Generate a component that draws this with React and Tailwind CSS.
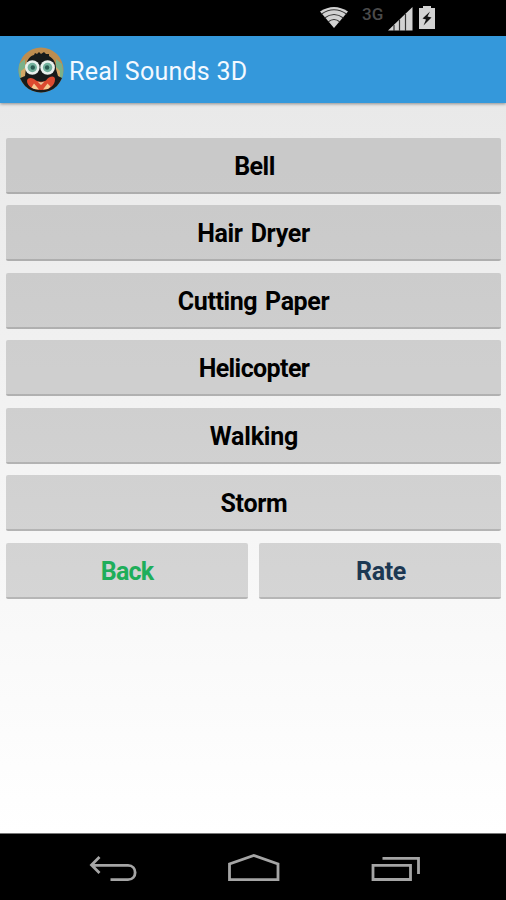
const sounds = [
  { name: 'Bell', spacing: 'tracking-[-0.5px] pl-[2px]' },
  { name: 'Hair Dryer', spacing: 'tracking-[-0.3px] [word-spacing:2px]' },
  { name: 'Cutting Paper', spacing: 'tracking-[-0.4px] [word-spacing:2px]' },
  { name: 'Helicopter', spacing: 'tracking-[-0.6px] pl-[1px]' },
  { name: 'Walking', spacing: 'tracking-[-0.2px] pl-[1px]' },
  { name: 'Storm', spacing: 'tracking-[-0.3px] pl-[1px]' },
]

function StatusBar() {
  return (
    <div className="h-9 shrink-0 bg-black flex justify-end pr-[71px]">
      <svg width="28" height="22" viewBox="0 0 28 22" className="mt-[6px]">
        <path d="M0 5.5Q14-3.5 28 5.5L14 22Z" fill="#d2d2d2" />
        <path
          d="M1.5 8Q14-.5 26.5 8M4.5 12Q14 5 23.5 12M8 16Q14 11 20 16"
          fill="none"
          stroke="#333"
          strokeWidth="1.1"
        />
      </svg>
      <span className="ml-[14px] mt-[3px] w-[25px] text-[17px] leading-[22px] font-medium text-[#4b4b4b]">
        3G
      </span>
      <svg width="25" height="24" viewBox="0 0 25 24" className="mt-[7px] ml-[1px]">
        <path d="M0 23.5L24.5 0V23.5Z" fill="#d2d2d2" />
        <path d="M6 24V18M11.5 24V12.5M17.5 24V7" stroke="#333" strokeWidth="1.2" />
      </svg>
      <svg width="16" height="23" viewBox="0 0 16 23" className="ml-[6px] mt-[6px]">
        <path d="M4 0H12V2H16V23H0V2H4Z" fill="#d2d2d2" />
        <path d="M11 5.5L3.5 12.5L7 13.5L4.5 19.5L12.5 11.5L8.5 10.5Z" fill="#111" />
      </svg>
    </div>
  )
}

function AppLogo() {
  return (
    <svg width="46" height="46" viewBox="0 0 46 46">
      <defs>
        <clipPath id="face">
          <circle cx="23" cy="23" r="22.5" />
        </clipPath>
      </defs>
      <g clipPath="url(#face)">
        <rect width="46" height="46" fill="#bd8d50" />
        <path d="M1 17L7 12V34L0 31ZM38 12L44 17L46 30L38 34Z" fill="#7bb188" />
        <path d="M3 24L8 20V36H3ZM38 20L42 24V36H38Z" fill="#d3a766" />
        {/* shaggy body */}
        <path
          d="M8 21C8 13 12 9 16 8L17 6L19 7L21 5L23 7L26 5L28 7L31 7L31 9C36 12 38 16 38 22L40 29L46 32L40 46H6L0 32L7 29Z"
          fill="#171b1b"
        />
        {/* mouth and teeth */}
        <path
          d="M9 34C9 30 15 30 18 33.5Q23 36 28 33.5C31 29 37 28 37 32.5C37 38 32 43 23 43C15 43 9 39 9 34Z"
          fill="#dc4a30"
        />
        <path d="M13.5 40.5L16 36.5L21 42.5L16 42ZM25 42.5L29.5 36.5L32.5 39.5L30 42Z" fill="#f5ca91" />
        <path d="M19.5 34.5L23 35.5L26.5 34.5L23 38Z" fill="#e8cda0" />
      </g>
      <circle cx="14.3" cy="20.5" r="7.3" fill="#e9f1ed" />
      <circle cx="14.3" cy="20.5" r="4.7" fill="#72b19d" />
      <circle cx="14.8" cy="20.5" r="2.2" fill="#285a50" />
      <circle cx="29.6" cy="20.5" r="7.3" fill="#e9f1ed" />
      <circle cx="29.6" cy="20.5" r="4.7" fill="#72b19d" />
      <circle cx="29.1" cy="20.5" r="2.2" fill="#285a50" />
    </svg>
  )
}

function SoundButton({ children, className }) {
  return (
    <button
      className={`h-14 w-full rounded-[2px] bg-black/14 border-b-2 border-black/15 pt-[4px] text-center text-[25px] leading-[30px] font-bold ${className}`}
    >
      {children}
    </button>
  )
}

function NavBar() {
  return (
    <div className="h-[67px] shrink-0 bg-black border-t border-[#777]">
      <svg
        width="506"
        height="66"
        viewBox="0 834 506 66"
        fill="none"
        stroke="#a5a5a5"
        strokeWidth="2.8"
      >
        <path d="M99.5 857L91.5 865L99.5 873M92 865.3H128C137.5 865.3 137.5 879.7 128 879.7H110.5" />
        <path d="M229.5 879.7V864L253.8 855.5L278 864V879.7Z" />
        <path d="M373 865.3H410.5V879.5H373ZM382.5 858.3H418.5V874" />
      </svg>
    </div>
  )
}

export default function App() {
  return (
    <div className="w-full h-[900px] flex flex-col overflow-hidden font-['Roboto',sans-serif]">
      <StatusBar />
      <header className="relative h-[67px] shrink-0 bg-[#3498db] flex items-center pl-[17.5px] shadow-[0_1px_3px_rgba(0,0,0,0.4)]">
        <AppLogo />
        <h1 className="ml-[5.5px] pt-[4px] text-[25px] leading-[30px] tracking-[0.25px] text-[#f3f9ff] whitespace-nowrap">
          Real Sounds 3D
        </h1>
      </header>

      <main className="flex-1 bg-linear-to-b from-[#e9e9e9] to-white pt-[34.5px] pl-[6px] pr-[5px]">
        <div className="flex flex-col gap-[11.5px]">
          {sounds.map((s) => (
            <SoundButton key={s.name} className={`text-black ${s.spacing}`}>
              {s.name}
            </SoundButton>
          ))}
          <div className="grid grid-cols-2 gap-[11px]">
            <SoundButton className="text-[#1eae5a] tracking-[-0.8px]">Back</SoundButton>
            <SoundButton className="text-[#1c3853] tracking-[-0.4px] pl-[2px]">Rate</SoundButton>
          </div>
        </div>
      </main>

      <NavBar />
    </div>
  )
}
